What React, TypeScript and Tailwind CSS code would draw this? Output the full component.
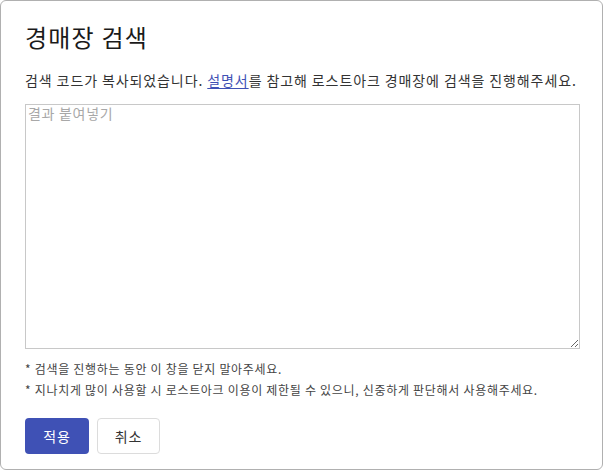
export default function App() {
  return (
    <div
      className="w-[603px] h-[470px] bg-white border border-[#b0b0b0] rounded-[6px] px-[24px] pt-[20px] text-[#222]"
      style={{ fontFamily: '"Noto Sans CJK KR", "Noto Sans", sans-serif' }}
    >
      {/* Title */}
      <h2 className="text-[24px] leading-[32px] font-normal tracking-[1.2px] text-[#1a1a1a]">경매장 검색</h2>

      {/* Description */}
      <p className="mt-[17px] text-[14px] leading-[20px] tracking-[0.9px] text-[#333]">
        검색 코드가 복사되었습니다.{' '}
        <a href="#" className="text-[#3f51b5] underline underline-offset-2">설명서</a>를 참고해 로스트아크 경매장에 검색을 진행해주세요.
      </p>

      {/* Paste area */}
      <textarea
        placeholder="결과 붙여넣기"
        className="mt-[14px] block w-[555px] h-[245px] border border-[#c8c8c8] px-[2px] pt-0 text-[14px] leading-[17px] tracking-[0.7px] text-[#333] placeholder:text-[#a8a8a8] outline-none"
      />

      {/* Notes */}
      <div className="mt-[9px] text-[12px] leading-[21px] tracking-[0.7px] text-[#444]">
        <p>* 검색을 진행하는 동안 이 창을 닫지 말아주세요.</p>
        <p>* 지나치게 많이 사용할 시 로스트아크 이용이 제한될 수 있으니, 신중하게 판단해서 사용해주세요.</p>
      </div>

      {/* Actions */}
      <div className="mt-[18px] flex gap-2">
        <button className="w-[64px] h-[36px] rounded-[4px] bg-[#3f51b5] text-white text-[14px] tracking-[0.8px]">적용</button>
        <button className="w-[63px] h-[36px] rounded-[4px] bg-white border border-[#dcdcdc] text-[#333] text-[14px] tracking-[0.8px]">취소</button>
      </div>
    </div>
  )
}
